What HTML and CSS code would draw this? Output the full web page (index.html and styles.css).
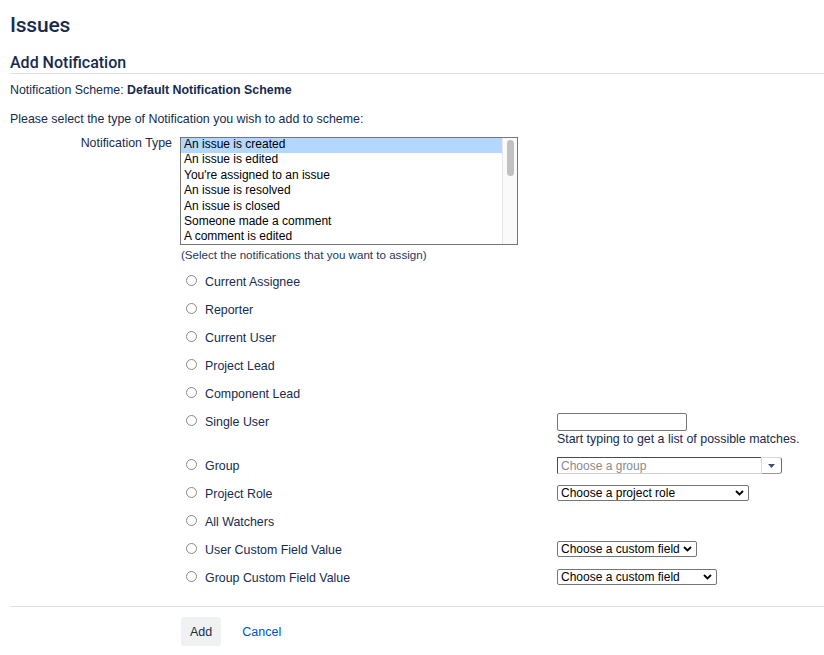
FILE: index.html
```html
<!DOCTYPE html>
<html lang="en">
<head>
<meta charset="utf-8">
<title>Add Notification</title>
<link rel="stylesheet" href="styles.css">
</head>
<body>
<main class="page">
  <h1 class="page-title">Issues</h1>
  <h2 class="section-title">Add Notification</h2>
  <p class="scheme">Notification Scheme: <strong>Default Notification Scheme</strong></p>
  <p class="intro">Please select the type of Notification you wish to add to scheme:</p>
  <form class="form">
    <div class="field-row">
      <label class="field-label">Notification Type</label>
      <div class="field-body">
        <div class="listbox" role="listbox">
          <div class="listbox-options">
            <div class="option selected">An issue is created</div>
            <div class="option">An issue is edited</div>
            <div class="option">You're assigned to an issue</div>
            <div class="option">An issue is resolved</div>
            <div class="option">An issue is closed</div>
            <div class="option">Someone made a comment</div>
            <div class="option">A comment is edited</div>
          </div>
          <div class="scrollbar"><div class="thumb"></div></div>
        </div>
        <div class="hint">(Select the notifications that you want to assign)</div>
      </div>
    </div>

    <div class="choices">
      <div class="choice">
        <label class="choice-label"><input type="radio" name="type"><span>Current Assignee</span></label>
      </div>
      <div class="choice">
        <label class="choice-label"><input type="radio" name="type"><span>Reporter</span></label>
      </div>
      <div class="choice">
        <label class="choice-label"><input type="radio" name="type"><span>Current User</span></label>
      </div>
      <div class="choice">
        <label class="choice-label"><input type="radio" name="type"><span>Project Lead</span></label>
      </div>
      <div class="choice">
        <label class="choice-label"><input type="radio" name="type"><span>Component Lead</span></label>
      </div>
      <div class="choice choice-tall">
        <label class="choice-label"><input type="radio" name="type"><span>Single User</span></label>
        <div class="choice-field">
          <input type="text" class="text-input">
          <div class="field-help">Start typing to get a list of possible matches.</div>
        </div>
      </div>
      <div class="choice">
        <label class="choice-label"><input type="radio" name="type"><span>Group</span></label>
        <div class="choice-field">
          <div class="combo">
            <input type="text" class="combo-input" placeholder="Choose a group">
            <span class="combo-button"><svg width="7" height="4" viewBox="0 0 7 4"><path d="M0 0h7L3.5 4z" fill="#42526e"/></svg></span>
          </div>
        </div>
      </div>
      <div class="choice">
        <label class="choice-label"><input type="radio" name="type"><span>Project Role</span></label>
        <div class="choice-field">
          <span class="select-wrap">
            <select class="select select-role"><option>Choose a project role</option></select>
            <svg class="chevron" width="9" height="6" viewBox="0 0 9 6"><path d="M1 1l3.5 3.5L8 1" fill="none" stroke="#000" stroke-width="1.8"/></svg>
          </span>
        </div>
      </div>
      <div class="choice">
        <label class="choice-label"><input type="radio" name="type"><span>All Watchers</span></label>
      </div>
      <div class="choice">
        <label class="choice-label"><input type="radio" name="type"><span>User Custom Field Value</span></label>
        <div class="choice-field">
          <span class="select-wrap">
            <select class="select select-user-cf"><option>Choose a custom field</option></select>
            <svg class="chevron" width="9" height="6" viewBox="0 0 9 6"><path d="M1 1l3.5 3.5L8 1" fill="none" stroke="#000" stroke-width="1.8"/></svg>
          </span>
        </div>
      </div>
      <div class="choice">
        <label class="choice-label"><input type="radio" name="type"><span>Group Custom Field Value</span></label>
        <div class="choice-field">
          <span class="select-wrap">
            <select class="select select-group-cf"><option>Choose a custom field</option></select>
            <svg class="chevron" width="9" height="6" viewBox="0 0 9 6"><path d="M1 1l3.5 3.5L8 1" fill="none" stroke="#000" stroke-width="1.8"/></svg>
          </span>
        </div>
      </div>
    </div>

    <div class="actions">
      <button type="button" class="btn">Add</button>
      <a href="#" class="cancel">Cancel</a>
    </div>
  </form>
</main>
</body>
</html>
```

FILE: styles.css
```css
* { box-sizing: border-box; }

html, body {
  margin: 0;
  padding: 0;
  background: #fff;
}

body {
  font-family: "Liberation Sans", Arial, sans-serif;
  font-size: 12.4px;
  line-height: 16px;
  color: #172b4d;
}

.page {
  padding: 13px 0 0 10px;
}

.page-title {
  margin: 0;
  font-family: Roboto, "Liberation Sans", Arial, sans-serif;
  font-size: 21px;
  line-height: 24px;
  font-weight: 500;
  letter-spacing: -0.2px;
  color: #172b4d;
}

.section-title {
  margin: 16px 0 0;
  font-family: Roboto, "Liberation Sans", Arial, sans-serif;
  font-size: 16px;
  line-height: 20px;
  font-weight: 500;
  color: #172b4d;
  border-bottom: 1px solid #dfe1e6;
  padding-bottom: 0;
}

.scheme {
  margin: 8px 0 0;
}

.scheme strong {
  font-weight: 700;
}

.intro {
  margin: 13px 0 0;
}

.form {
  margin-top: 8px;
}

.field-row {
  display: grid;
  grid-template-columns: 162px 1fr;
  column-gap: 8px;
  align-items: start;
}

.field-label {
  text-align: right;
  line-height: 17px;
}

.field-body {
  padding-top: 2px;
}

.listbox {
  display: flex;
  width: 338px;
  height: 108px;
  border: 1px solid #767676;
  background: #fff;
}

.listbox-options {
  flex: 1;
  overflow: hidden;
  color: #000;
  font-size: 12px;
}

.option {
  height: 15.4px;
  line-height: 13.4px;
  padding: 0 3px;
  white-space: nowrap;
}

.option.selected {
  background: #b3d7ff;
}

.scrollbar {
  width: 15px;
  background: #fafafa;
  border-left: 1px solid #e8e8e8;
  padding: 2px 3px 0 4px;
}

.thumb {
  width: 7px;
  height: 36px;
  border-radius: 4px;
  background: #c1c1c1;
}

.hint {
  margin-top: 3px;
  padding-left: 1px;
  font-size: 11.6px;
  line-height: 14px;
  color: #253858;
}

.choices {
  margin-left: 170px;
  margin-top: 6px;
}

.choice {
  display: grid;
  grid-template-columns: 377px auto;
  align-items: start;
  min-height: 28px;
}

.choice-tall {
  min-height: 44px;
}

.choice-label {
  display: flex;
  align-items: center;
  height: 28px;
  color: #172b4d;
}

.choice-label input[type="radio"] {
  appearance: none;
  -webkit-appearance: none;
  width: 11px;
  height: 11px;
  margin: -3px 8px 0 6px;
  border: 1px solid #8a8a8a;
  border-radius: 50%;
  background: #fff;
  flex: none;
}

.choice-field {
  padding-top: 5px;
}

.text-input {
  display: block;
  width: 130px;
  height: 18px;
  margin: 0;
  border: 1px solid #767676;
  border-radius: 2px;
  background: #fff;
  padding: 0 3px;
  font: 12px "Liberation Sans", Arial, sans-serif;
}

.field-help {
  margin-top: 1px;
  line-height: 14px;
  color: #172b4d;
}

.combo {
  display: flex;
  width: 225px;
  height: 17px;
}

.combo-input {
  width: 204px;
  height: 17px;
  margin: 0;
  padding: 0 3px;
  border: 0;
  border-top: 1px solid #4a4a4a;
  border-left: 1px solid #4a4a4a;
  border-bottom: 1px solid #d0d0d0;
  font: 12px "Liberation Sans", Arial, sans-serif;
  color: #000;
  outline: none;
}

.combo-input::placeholder {
  color: #8a8a8a;
}

.combo-button {
  display: flex;
  align-items: center;
  justify-content: center;
  width: 21px;
  height: 17px;
  border-left: 1px solid #dcdcdc;
  border-right: 1px solid #6b6b6b;
  border-bottom: 1px solid #9a9a9a;
  border-top: 1px solid #d8d8d8;
  border-radius: 0 3px 3px 0;
}

.select-wrap {
  position: relative;
  display: inline-block;
  vertical-align: top;
}

.select {
  appearance: none;
  -webkit-appearance: none;
  display: block;
  height: 16px;
  margin: 0;
  padding: 0 0 0 3px;
  border: 1px solid #767676;
  border-radius: 2px;
  background: #fff;
  color: #000;
  font: 12px/14px "Liberation Sans", Arial, sans-serif;
}

.select-role { width: 192px; }
.select-user-cf { width: 140px; }
.select-group-cf { width: 160px; }

.chevron {
  position: absolute;
  right: 5px;
  top: 5px;
  pointer-events: none;
}

.actions {
  margin-top: 14px;
  border-top: 1px solid #dfe1e6;
  padding: 10px 0 0 171px;
  display: flex;
  align-items: center;
}

.btn {
  height: 29px;
  padding: 0 9px;
  border: 0;
  border-radius: 3px;
  background: #f0f1f3;
  color: #172b4d;
  font: 12.5px "Liberation Sans", Arial, sans-serif;
}

.cancel {
  margin-left: 21px;
  color: #0052cc;
  text-decoration: none;
  font-size: 12.5px;
}
```
